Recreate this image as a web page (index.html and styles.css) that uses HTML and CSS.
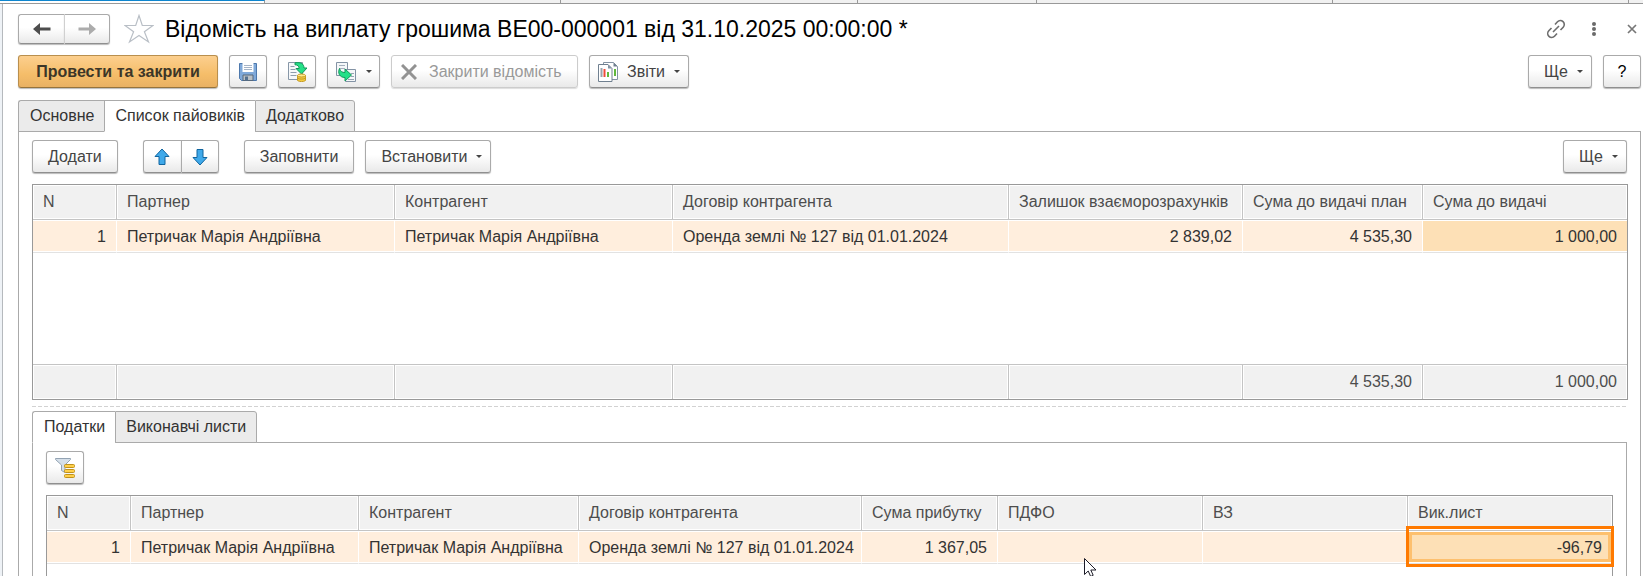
FILE: index.html
```html
<!DOCTYPE html>
<html lang="uk">
<head>
<meta charset="utf-8">
<title>Відомість на виплату грошима</title>
<link rel="stylesheet" href="styles.css">
</head>
<body>
<div class="window-tabs"><span class="wt wt-active"></span><span class="wt wt-2"></span><span class="wt wt-3"></span><span class="wt wt-4"></span><span class="wt wt-5"></span><span class="wt wt-5"></span><span class="wt wt-last"></span></div>
<main class="form">
  <header class="title-row">
    <div class="group nav">
      <button class="btn" aria-label="Назад"><svg width="18" height="14" viewBox="0 0 18 14"><path d="M0 7 7 1v4.500h10.500v3H7V13z" fill="#4d4d4d"/></svg></button>
      <button class="btn" aria-label="Вперед"><svg width="18" height="14" viewBox="0 0 18 14"><path d="M18 7 11 1v4.500H.5v3H11V13z" fill="#acacac"/></svg></button>
    </div>
    <button class="plain star" aria-label="Обране"><svg width="30" height="30" viewBox="0 0 30 30"><path d="M15 1.500 18.300 11.500H29L20.400 17.800 24.500 28 15 21.500 5.500 28 9.600 17.800 1 11.500h10.700z" fill="#fff" stroke="#b9bfc6" stroke-width="1.200"/></svg></button>
    <h1>Відомість на виплату грошима ВЕ00-000001 від 31.10.2025 00:00:00 *</h1>
    <div class="window-tools">
      <button class="plain" aria-label="Посилання"><svg width="20" height="20" viewBox="0 0 20 20" fill="none" stroke="#6e6e6e" stroke-width="1.600"><path d="M9 5.500l2.500-2.700a3.900 3.900 0 0 1 5.700 5.400L14.500 11M11 14.500l-2.500 2.700a3.900 3.900 0 0 1-5.700-5.400L5.500 9M7 13l6-6"/></svg></button>
      <button class="plain" aria-label="Меню"><svg width="6" height="16" viewBox="0 0 6 16" fill="#6a6a6a"><circle cx="3" cy="3" r="2"/><circle cx="3" cy="8" r="2"/><circle cx="3" cy="13" r="2"/></svg></button>
      <button class="plain" aria-label="Закрити"><svg width="10" height="10" viewBox="0 0 10 10" stroke="#777" stroke-width="1.700"><path d="M1 1l8 8M9 1 1 9"/></svg></button>
    </div>
  </header>

  <div class="toolbar">
    <button class="btn primary">Провести та закрити</button>
    <button class="btn icon" aria-label="Записати"><svg width="20" height="20" viewBox="0 0 20 20"><path d="M1.500 1.500h17v17H3.500l-2-2z" fill="#7fa9da" stroke="#4d78ac"/><path d="M4.500 1h11v9h-11z" fill="#fff"/><path d="M6 3.500h8M6 5.500h8M6 7.500h8" stroke="#a5b4c7"/><path d="M5 13h10v5.500H5z" fill="#b9c0c6" stroke="#56687c"/><path d="M7 14.500h3v4H7z" fill="#53708f"/></svg></button>
    <button class="btn icon" aria-label="Провести"><svg width="20" height="20" viewBox="0 0 20 20"><path d="M1.500.5h14v17h-14z" fill="#f6f8fa" stroke="#8797a7"/><path d="M3.500 4.500h4M3.500 7.500h5M3.500 10.500h6M3.500 13.500h6" stroke="#8e9dad"/><path d="M8 .8c6-.8 9 1 9 5.200h3L14.500 12 9 6.500h3.200C12 4 10.500 2.800 8 2.800z" fill="#25e088" stroke="#13975a"/><path d="M10.500 13.500h8v5c-2 1.500-6 1.500-8 0z" fill="#f2ca3e" stroke="#c69c28"/><ellipse cx="14.500" cy="13.500" rx="4" ry="1.500" fill="#ffe98d" stroke="#c69c28"/><path d="M10.500 16c2 1.500 6 1.500 8 0" fill="none" stroke="#c69c28"/></svg></button>
    <button class="btn menu-icon" aria-label="Створити на підставі"><svg width="20" height="20" viewBox="0 0 20 20"><path d="M.5.5h11v13H.5z" fill="#f5f7f9" stroke="#8393a5"/><path d="M3 3.500h6M3 6.500h6" stroke="#a4b0bd"/><path d="M9.500 7.500h10v12h-10z" fill="#f5f7f9" stroke="#8393a5"/><path d="M15 11.500h3M15 14.500h3M12 17.500h6" stroke="#96a4b3"/><path d="M3.500 6.500C4.500 9.500 6 10.500 9 10.500V7l6.500 6L9 19v-3.500C3.500 15.500 1.500 11 3.500 6.500z" fill="#25e088" stroke="#13975a"/></svg><i class="caret"></i></button>
    <button class="btn close-sheet" disabled><svg width="16" height="16" viewBox="0 0 16 16" stroke="#929292" stroke-width="3"><path d="M1 1l14 14M15 1 1 15"/></svg>Закрити відомість</button>
    <button class="btn reports"><svg width="20" height="20" viewBox="0 0 20 20"><path d="M5.500.5h10l4 4v13h-14z" fill="#fff" stroke="#8493a3"/><path d="M15.500.5v4h4z" fill="#708090"/><path d="M17 7v7" stroke="#61b83c" stroke-width="2"/><path d="M.5 2.500h9.500l4 4v13H.5z" fill="#fff" stroke="#708090"/><path d="M10 2.500v4h4z" fill="#8493a3"/><path d="M3.500 6v9" stroke="#9aa4ac" stroke-width="2"/><path d="M6.500 7v8" stroke="#ee4d3b" stroke-width="2"/><path d="M10 10v5" stroke="#61b83c" stroke-width="2"/></svg>Звіти<i class="caret"></i></button>
    <span class="spacer"></span>
    <button class="btn more">Ще<i class="caret"></i></button>
    <button class="btn icon help">?</button>
  </div>

  <div class="tabs" role="tablist">
    <button class="tab" role="tab">Основне</button>
    <button class="tab active" role="tab" aria-selected="true">Список пайовиків</button>
    <button class="tab" role="tab">Додатково</button>
  </div>

  <section class="panel">
    <div class="toolbar inner">
      <button class="btn">Додати</button>
      <div class="group arrows">
        <button class="btn" aria-label="Вгору"><svg width="16" height="18" viewBox="0 0 16 18"><path d="M8 1 15 8.500H11V16.500H5V8.500H1z" fill="#3fa9ea" stroke="#10659f" stroke-linejoin="round"/></svg></button>
        <button class="btn" aria-label="Вниз"><svg width="16" height="18" viewBox="0 0 16 18"><path d="M8 17 1 9.500H5V1.500h6v8h4z" fill="#3fa9ea" stroke="#10659f" stroke-linejoin="round"/></svg></button>
      </div>
      <button class="btn">Заповнити</button>
      <button class="btn set">Встановити<i class="caret"></i></button>
      <span class="spacer"></span>
      <button class="btn more">Ще<i class="caret"></i></button>
    </div>

    <table class="grid">
      <colgroup><col class="c84"><col class="c278"><col class="c278"><col class="c336"><col class="c234"><col class="c180"><col class="c204"></colgroup>
      <thead><tr><th>N</th><th>Партнер</th><th>Контрагент</th><th>Договір контрагента</th><th>Залишок взаєморозрахунків</th><th>Сума до видачі план</th><th>Сума до видачі</th></tr></thead>
      <tbody>
        <tr class="row"><td class="num">1</td><td>Петричак Марія Андріївна</td><td>Петричак Марія Андріївна</td><td>Оренда землі № 127 від 01.01.2024</td><td class="num">2 839,02</td><td class="num">4 535,30</td><td class="num current">1 000,00</td></tr>
        <tr class="blank"><td colspan="7"></td></tr>
      </tbody>
      <tfoot><tr><td></td><td></td><td></td><td></td><td></td><td class="num">4 535,30</td><td class="num">1 000,00</td></tr></tfoot>
    </table>

    <div class="splitter"></div>

    <div class="tabs" role="tablist">
      <button class="tab active" role="tab" aria-selected="true">Податки</button>
      <button class="tab" role="tab">Виконавчі листи</button>
    </div>
    <section class="panel sub">
      <div class="toolbar inner">
        <button class="btn icon" aria-label="Відбір"><svg width="20" height="22" viewBox="0 0 20 22"><path d="M.5 1.500h15v1L10 8v7.500l-3.500-2V8L.5 2.500z" fill="#d5dfe9" stroke="#93a3b3"/><g fill="#ffd04a" stroke="#c0921d"><rect x="9.500" y="7.500" width="10" height="3" rx="1"/><rect x="9.500" y="12.500" width="10" height="3" rx="1"/><rect x="9.500" y="17.500" width="10" height="3" rx="1"/></g></svg></button>
      </div>
      <table class="grid">
        <colgroup><col class="c84"><col class="c228"><col class="c220"><col class="c283"><col class="c136"><col class="c205"><col class="c205"><col class="c204"></colgroup>
        <thead><tr><th>N</th><th>Партнер</th><th>Контрагент</th><th>Договір контрагента</th><th>Сума прибутку</th><th>ПДФО</th><th>ВЗ</th><th>Вик.лист</th></tr></thead>
        <tbody>
          <tr class="row"><td class="num">1</td><td>Петричак Марія Андріївна</td><td>Петричак Марія Андріївна</td><td>Оренда землі № 127 від 01.01.2024</td><td class="num">1 367,05</td><td></td><td></td><td class="num current focused">-96,79<span class="marker"></span></td></tr>
          <tr class="blank"><td colspan="8"></td></tr>
        </tbody>
      </table>
    </section>
  </section>
</main>
<svg class="cursor" width="13" height="18" viewBox="0 0 13 18"><path d="M.5.5v16l3.700-3.500 2.500 5.500 2.500-1.200L6.800 12H12z" fill="#fff" stroke="#1c1c28"/></svg>
</body>
</html>
```
FILE: styles.css
```css
* { box-sizing: border-box; }
body {
  margin: 0;
  height: 100vh;
  overflow: hidden;
  position: relative;
  display: flex;
  flex-direction: column;
  background: #fff;
  color: #333;
  font: 16px/20px "Liberation Sans", Arial, sans-serif;
}
button { font: inherit; color: #444; margin: 0; }
svg { display: block; flex: none; }

.window-tabs { display: flex; flex: none; height: 4px; border-bottom: 1px solid #999; background: #f1f1f1; }
.wt { border-right: 1px solid #999; }
.wt-active { width: 265px; background: #fff; border-top: 1px solid #0e86cf; }
.wt-2 { width: 296px; }
.wt-3 { width: 297px; }
.wt-4 { width: 179px; }
.wt-5 { width: 296px; }
.wt-last { flex: 1; border: 0; }

.form {
  flex: 1;
  min-height: 0;
  display: flex;
  flex-direction: column;
  margin-left: 2px;
  border-left: 1px solid #b5b9bd;
  box-shadow: -2px 0 #eef2f6;
  padding: 10px 2px 0 15px;
}

.title-row { display: flex; align-items: center; flex: none; height: 30px; }
.title-row h1 { margin: 0 0 0 11px; color: #000; font-size: 23px; line-height: 28px; font-weight: 400; white-space: nowrap; }
.plain { display: flex; padding: 0; border: 0; background: none; }
.star { margin-left: 14px; }
.window-tools { display: flex; align-items: center; margin-left: auto; gap: 25px; padding-right: 4px; }
.window-tools .plain:last-child { margin-left: 5px; }

.btn {
  display: flex;
  align-items: center;
  justify-content: center;
  height: 33px;
  padding: 0 15px;
  border: 1px solid #aaa;
  border-bottom-color: #8f8f8f;
  border-radius: 3px;
  background: linear-gradient(#fff 45%, #e9e9e9);
  box-shadow: 0 1px 1px #bbb;
  white-space: nowrap;
}
.group { display: flex; border-radius: 3px; }
.group .btn { padding: 0; }
.group .btn:first-child { border-radius: 3px 0 0 3px; border-right: 0; }
.group .btn:last-child { border-radius: 0 3px 3px 0; }
.nav .btn { width: 46px; height: 30px; }
.nav .btn:last-child { border-left-color: #d0d0d0; }
.arrows { margin: 0 14px; }
.arrows .btn { width: 38px; }

.toolbar { display: flex; flex: none; gap: 11px; margin-top: 11px; }
.spacer { flex: 1; }
.primary {
  width: 200px;
  color: #3c3628;
  font-weight: 700;
  border-color: #b98f4e;
  border-bottom-color: #96733b;
  background: linear-gradient(#fccf8e, #f5bd69 60%, #e9b163);
}
.icon { width: 38px; padding: 0; }
.menu-icon { width: 53px; padding: 0; gap: 10px; }
.close-sheet { width: 187px; padding: 0 15px 0 9px; color: #999; border-color: #ccc; box-shadow: 0 1px 1px #ddd; justify-content: flex-start; gap: 12px; }
.reports { width: 100px; padding: 0 8px; gap: 9px; }
.more { width: 64px; padding: 0 8px 0 15px; gap: 9px; justify-content: space-between; }
.set { padding-right: 8px; gap: 8px; }
.help { color: #000; }
.caret { border: 3px solid transparent; border-top-color: #444; border-bottom: 0; }

.tabs { display: flex; flex: none; height: 31px; margin-top: 12px; }
.tab {
  height: 32px;
  padding: 0 10px;
  border: 1px solid #aaa;
  border-right-width: 0;
  background: #ebebeb;
  color: #333;
  white-space: nowrap;
  z-index: 1;
}
.tab:first-child { border-top-left-radius: 3px; padding-left: 11px; }
.tab:last-child { border-right-width: 1px; border-top-right-radius: 3px; }
.tab.active { background: #fff; border-bottom-color: #fff; }

.panel {
  flex: 1;
  min-height: 0;
  display: flex;
  flex-direction: column;
  border: 1px solid #aaa;
  border-bottom: 0;
  padding: 0 13px;
}
.inner { margin: 8px 0 11px; }

.grid {
  width: 100%;
  flex: none;
  table-layout: fixed;
  border: 1px solid #999;
  border-collapse: separate;
  border-spacing: 0;
}
.grid th, .grid td { padding: 0 10px; text-align: left; font-weight: 400; white-space: nowrap; }
.grid th, .grid tfoot td {
  height: 35px;
  background: #f1f1f1;
  color: #4d4d4d;
  border-right: 1px solid #c4c4c4;
  box-shadow: inset 0 0 0 1px #fff;
}
.grid th { border-bottom: 1px solid #c4c4c4; }
.grid tfoot td { border-top: 1px solid #c4c4c4; }
.grid th:last-child, .grid tfoot td:last-child { border-right: 0; }
.grid .row td {
  height: 33px;
  padding-top: 2px;
  background: #ffeedd;
  border-right: 1px solid #fff;
  border-bottom: 1px solid #e2e2e2;
  box-shadow: inset 0 1px #fff, inset 0 -1px #fff;
}
.grid .row td:last-child { border-right: 0; }
.grid .num { text-align: right; }
.grid .row .current { background: #fde0b6; }
.grid .row .focused {
  position: relative;
  box-shadow: inset 0 1px #fff, inset 0 -1px #fff, inset 0 0 0 4px #fdc06e;
}
.marker { position: absolute; inset: -5px -2px -4px; border: 3px solid #ff7a00; pointer-events: none; }
.grid .blank td { height: 111px; padding: 0; }
.sub .grid { border-bottom: 0; }
.sub .grid .blank td { height: 12px; }

.c84 { width: 84px; }
.c136 { width: 136px; }
.c180 { width: 180px; }
.c204 { width: 204px; }
.c205 { width: 205px; }
.c220 { width: 220px; }
.c228 { width: 228px; }
.c234 { width: 234px; }
.c278 { width: 278px; }
.c283 { width: 283px; }
.c336 { width: 336px; }

.splitter {
  flex: none;
  height: 1px;
  margin-top: 6px;
  background: repeating-linear-gradient(90deg, #d2d2d2 0 4px, transparent 4px 6px);
}
.splitter + .tabs { margin-top: 4px; }

.cursor { position: absolute; left: 1084px; top: 558px; z-index: 2; }
```
